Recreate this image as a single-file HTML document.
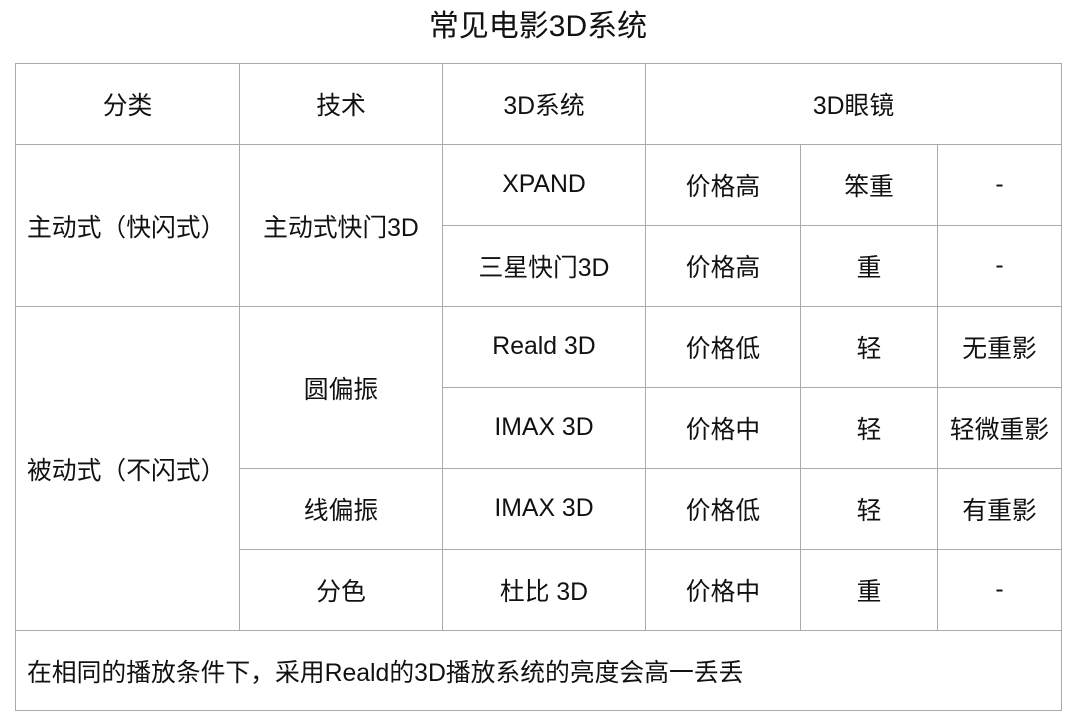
<!DOCTYPE html>
<html><head><meta charset="utf-8"><style>
body{margin:0;width:1076px;height:722px;background:#fff;font-family:"Liberation Sans","Noto Sans CJK SC",sans-serif;color:#111;overflow:hidden}
h1{position:absolute;left:0;top:7px;width:1076px;text-align:center;margin:0;font-size:30px;font-weight:normal;line-height:40px}
table{position:absolute;left:15px;top:63px;border-collapse:collapse;table-layout:fixed;font-size:24.8px}
td{border:1px solid #aaa;height:80px;padding:0;text-align:center;vertical-align:middle;white-space:nowrap}
td.l{text-align:left;padding-left:11px}
</style></head><body>
<h1>常见电影3D系统</h1>
<table>
<colgroup><col style="width:224px"><col style="width:203px"><col style="width:203px"><col style="width:155px"><col style="width:137px"><col style="width:124px"></colgroup>
<tr><td>分类</td><td>技术</td><td>3D系统</td><td colspan="3">3D眼镜</td></tr>
<tr><td class="l" rowspan="2">主动式（快闪式）</td><td rowspan="2">主动式快门3D</td><td>XPAND</td><td>价格高</td><td>笨重</td><td>-</td></tr>
<tr><td>三星快门3D</td><td>价格高</td><td>重</td><td>-</td></tr>
<tr><td class="l" rowspan="4">被动式（不闪式）</td><td rowspan="2">圆偏振</td><td>Reald 3D</td><td>价格低</td><td>轻</td><td>无重影</td></tr>
<tr><td>IMAX 3D</td><td>价格中</td><td>轻</td><td>轻微重影</td></tr>
<tr><td>线偏振</td><td>IMAX 3D</td><td>价格低</td><td>轻</td><td>有重影</td></tr>
<tr><td>分色</td><td>杜比 3D</td><td>价格中</td><td>重</td><td>-</td></tr>
<tr><td class="l" colspan="6" style="height:79px">在相同的播放条件下，采用Reald的3D播放系统的亮度会高一丢丢</td></tr>
</table>
</body></html>
